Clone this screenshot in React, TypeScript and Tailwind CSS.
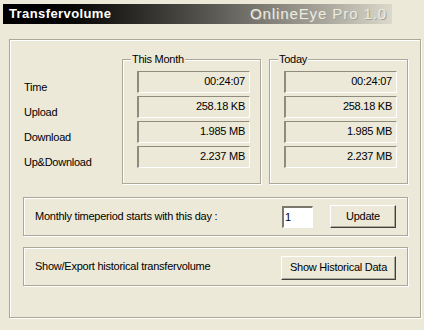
import type { ReactNode } from 'react'

const FONT = "font-['Liberation_Sans',Arial,sans-serif]"

const rows = [
  { label: 'Time', month: '00:24:07', today: '00:24:07' },
  { label: 'Upload', month: '258.18 KB', today: '258.18 KB' },
  { label: 'Download', month: '1.985 MB', today: '1.985 MB' },
  { label: 'Up&Download', month: '2.237 MB', today: '2.237 MB' },
]

// etched frame: grey line with a white line just inside / outside
const ETCHED =
  'border border-[#aca899] shadow-[inset_1px_1px_0_#fff,1px_1px_0_#fff]'

function Field({ value }: { value: string }) {
  return (
    <div className="flex h-[22px] w-[113px] items-center justify-end border-t border-l-2 border-r border-b border-t-[#8f8c7e] border-l-[#8f8c7e] border-r-white border-b-white pr-[4px] pb-[2px]">
      {value}
    </div>
  )
}

function Group({ title, values }: { title: string; values: string[] }) {
  return (
    <div className={`relative h-[125px] w-[139px] ${ETCHED}`}>
      <span className="absolute -top-[8px] left-[8px] bg-[#ece9d8] px-[1px] leading-[14px]">
        {title}
      </span>
      <div className="flex flex-col gap-[3px] pt-[11px] pl-[14px]">
        {values.map((v, i) => (
          <Field key={i} value={v} />
        ))}
      </div>
    </div>
  )
}

function Button({ children, className }: { children: ReactNode; className: string }) {
  return (
    <button
      type="button"
      className={`flex items-center justify-center border border-t-white border-l-white border-r-[#404040] border-b-[#404040] bg-[#ece9d8] shadow-[inset_-1px_-1px_0_#aca899] ${className}`}
    >
      {children}
    </button>
  )
}

export default function App() {
  return (
    <div
      className={`h-[330px] w-[424px] overflow-hidden bg-[#ece9d8] pt-[4px] pl-[3px] text-[11px] tracking-[-0.25px] text-black ${FONT}`}
    >
      <div className="flex h-[20px] w-[389px] items-center justify-between bg-linear-to-r from-black from-[3%] to-[#dcd9cc] pr-[5px] pl-[6px]">
        <span className="text-[13px] font-bold tracking-[0.4px] text-white">
          Transfervolume
        </span>
        <span className="text-[15px] tracking-[0.9px] text-[#ecebe1] [text-shadow:1px_1px_0_#a3a094]">
          OnlineEye Pro 1.0
        </span>
      </div>

      <div className={`mt-[15px] ml-[6px] h-[279px] w-[412px] ${ETCHED} pt-[19px]`}>
        <div className="flex">
          <div className="ml-[14px] flex w-[98px] flex-col pt-[16px]">
            {rows.map((r) => (
              <div key={r.label} className="flex h-[25px] items-center">
                {r.label}
              </div>
            ))}
          </div>
          <div className="flex gap-[8px]">
            <Group title="This Month" values={rows.map((r) => r.month)} />
            <Group title="Today" values={rows.map((r) => r.today)} />
          </div>
        </div>

        <div
          className={`mt-[13px] ml-[13px] flex h-[39px] w-[385px] items-center ${ETCHED} pr-[11px] pl-[11px]`}
        >
          <span className="flex-1">Monthly timeperiod starts with this day :</span>
          <input
            readOnly
            value="1"
            className="h-[22px] w-[31px] border-t-2 border-l-2 border-r border-b border-t-[#7a786c] border-l-[#7a786c] border-r-white border-b-white bg-white px-[1px] text-[11px] outline-none"
          />
          <Button className="ml-[17px] h-[23px] w-[66px]">Update</Button>
        </div>

        <div
          className={`mt-[11px] ml-[13px] flex h-[39px] w-[385px] items-center ${ETCHED} pr-[11px] pl-[11px]`}
        >
          <span className="flex-1">Show/Export historical transfervolume</span>
          <Button className="mt-[2px] h-[24px] w-[115px]">Show Historical Data</Button>
        </div>
      </div>
    </div>
  )
}
